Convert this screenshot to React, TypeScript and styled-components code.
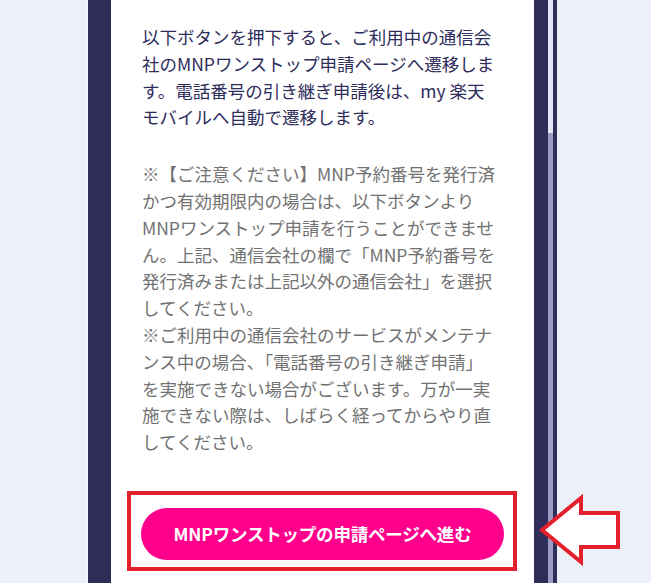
import React from "react";
import styled, { createGlobalStyle } from "styled-components";

const GlobalStyle = createGlobalStyle`
  html, body {
    margin: 0;
    padding: 0;
    background: #ecf0f8;
    overflow: hidden;
  }
  * { box-sizing: border-box; }
`;

const Page = styled.div`
  position: relative;
  display: flex;
  height: 583px;
  padding-left: 87px;
  font-family: "Noto Sans CJK JP", "Noto Sans", sans-serif;
`;

const Frame = styled.div`
  display: flex;
  height: 100%;
  border-left: 1px solid #f7f8fc;
`;

const Rail = styled.div<{ $w: number }>`
  width: ${(p) => p.$w}px;
  background: #2f2e5b;
  flex: none;
`;

const ScrollTrack = styled.div`
  width: 5px;
  flex: none;
  display: flex;
  flex-direction: column;
  background: #e6e6f4;
`;

const ScrollGap = styled.div`
  height: 133px;
  flex: none;
`;

const ScrollThumb = styled.div`
  flex: 1;
  background: #9d9bc2;
`;

const Content = styled.div`
  width: 423px;
  flex: none;
  background: #ffffff;
  padding-top: 24px;
  display: flex;
  flex-direction: column;
`;

const Paragraph = styled.p<{ $muted?: boolean }>`
  margin: 0 0 30px 0;
  padding-left: 31px;
  font-size: 17.5px;
  line-height: 26.8px;
  white-space: nowrap;
  color: ${(p) => (p.$muted ? "#727272" : "#2e2d5b")};
`;

const Annotation = styled.div`
  margin: 5px 0 0 16px;
  width: 390px;
  border: 4px solid #e3202b;
  padding: 13px 9px 7px 10px;
`;

const CTAButton = styled.button`
  display: flex;
  align-items: center;
  justify-content: center;
  width: 363px;
  height: 52px;
  border: none;
  border-radius: 26px;
  background: #ff008c;
  color: #ffffff;
  font-family: "Noto Sans CJK JP", "Noto Sans", sans-serif;
  font-weight: 700;
  font-size: 17.5px;
  letter-spacing: -0.2px;
  padding: 0;
  cursor: pointer;
`;

const ArrowMark = styled.svg`
  position: absolute;
  left: 538px;
  top: 494px;
  width: 84px;
  height: 72px;
`;

export default function App() {
  return (
    <>
      <GlobalStyle />
      <Page>
        <Frame>
          <Rail $w={23} />
          <Content>
            <Paragraph>
              以下ボタンを押下すると、ご利用中の通信会
              <br />
              社のMNPワンストップ申請ページへ遷移しま
              <br />
              す。電話番号の引き継ぎ申請後は、my 楽天
              <br />
              モバイルへ自動で遷移します。
            </Paragraph>
            <Paragraph $muted>
              ※【ご注意ください】MNP予約番号を発行済
              <br />
              かつ有効期限内の場合は、以下ボタンより
              <br />
              MNPワンストップ申請を行うことができませ
              <br />
              ん。上記、通信会社の欄で「MNP予約番号を
              <br />
              発行済みまたは上記以外の通信会社」を選択
              <br />
              してください。
              <br />
              ※ご利用中の通信会社のサービスがメンテナ
              <br />
              ンス中の場合、「電話番号の引き継ぎ申請」
              <br />
              を実施できない場合がございます。万が一実
              <br />
              施できない際は、しばらく経ってからやり直
              <br />
              してください。
            </Paragraph>
            <Annotation>
              <CTAButton>MNPワンストップの申請ページへ進む</CTAButton>
            </Annotation>
          </Content>
          <Rail $w={14} />
          <ScrollTrack>
            <ScrollGap />
            <ScrollThumb />
          </ScrollTrack>
          <Rail $w={4} />
        </Frame>
        <ArrowMark viewBox="0 0 84 72">
          <polygon
            points="4,36 43,4 43,19 80,19 80,53 43,53 43,68"
            fill="#ffffff"
            stroke="#e3202b"
            strokeWidth="4"
            strokeLinejoin="miter"
          />
        </ArrowMark>
      </Page>
    </>
  );
}
